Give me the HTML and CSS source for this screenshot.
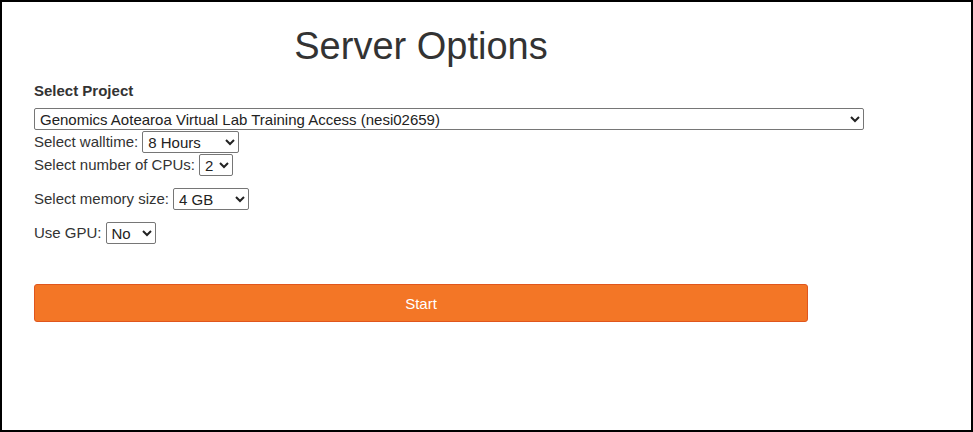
FILE: index.html
```html
<!DOCTYPE html>
<html lang="en">
<head>
<meta charset="utf-8">
<title>Server Options</title>
<link rel="stylesheet" href="styles.css">
</head>
<body>
<div class="frame">
  <div class="container">
    <h1 class="title">Server Options</h1>
    <form class="form">
      <label class="project-label" for="project">Select Project</label>
      <select id="project" class="select select-project">
        <option>Genomics Aotearoa Virtual Lab Training Access (nesi02659)</option>
      </select>
      <div class="field field-tight">
        <label for="walltime">Select walltime:</label>
        <select id="walltime" class="select select-walltime">
          <option>8 Hours</option>
          <option>12 Hours</option>
        </select>
      </div>
      <div class="field field-tight">
        <label for="cpus">Select number of CPUs:</label>
        <select id="cpus" class="select select-cpus">
          <option>2</option>
          <option>4</option>
        </select>
      </div>
      <div class="field field-spaced">
        <label for="memory">Select memory size:</label>
        <select id="memory" class="select select-memory">
          <option>4 GB</option>
          <option>8 GB</option>
        </select>
      </div>
      <div class="field field-spaced">
        <label for="gpu">Use GPU:</label>
        <select id="gpu" class="select select-gpu">
          <option>No</option>
          <option>Yes</option>
        </select>
      </div>
      <button type="submit" class="start">Start</button>
    </form>
  </div>
</div>
</body>
</html>
```

FILE: styles.css
```css
* { box-sizing: border-box; }

html, body {
  margin: 0;
  padding: 0;
  background: #ffffff;
}

body {
  font-family: "Liberation Sans", Arial, sans-serif;
  font-size: 15px;
  color: #333333;
}

.frame {
  width: 973px;
  height: 432px;
  border: 2px solid #000000;
  padding: 0 0 0 32px;
}

.container {
  width: 774px;
}

.title {
  margin: 20px 0 0 0;
  font-size: 38px;
  font-weight: 400;
  line-height: 48px;
  text-align: center;
  color: #333333;
}

.form {
  display: flex;
  flex-direction: column;
  align-items: flex-start;
  margin-top: 11px;
}

.project-label {
  font-weight: 700;
  line-height: 20px;
  margin-bottom: 7px;
  color: #333333;
}

.select {
  font-family: "Liberation Sans", Arial, sans-serif;
  font-size: 15px;
  color: #222222;
  height: 22px;
  padding: 0 1px;
  border: 1px solid #767676;
  border-radius: 2px;
  background: #ffffff;
}

.select-project { width: 830px; }
.select-walltime { width: 97px; }
.select-cpus { width: 34px; }
.select-memory { width: 76px; }
.select-gpu { width: 50px; }

.field {
  display: flex;
  align-items: center;
  gap: 4px;
  height: 22px;
  line-height: 20px;
}

.field label { color: #333333; }

.field-tight { margin-top: 1px; }
.field-spaced { margin-top: 12px; }

.start {
  margin-top: 40px;
  width: 774px;
  height: 38px;
  font-family: "Liberation Sans", Arial, sans-serif;
  font-size: 15px;
  color: #ffffff;
  background: #f37626;
  border: 1px solid #e0561d;
  border-radius: 3px;
  cursor: pointer;
}
```
